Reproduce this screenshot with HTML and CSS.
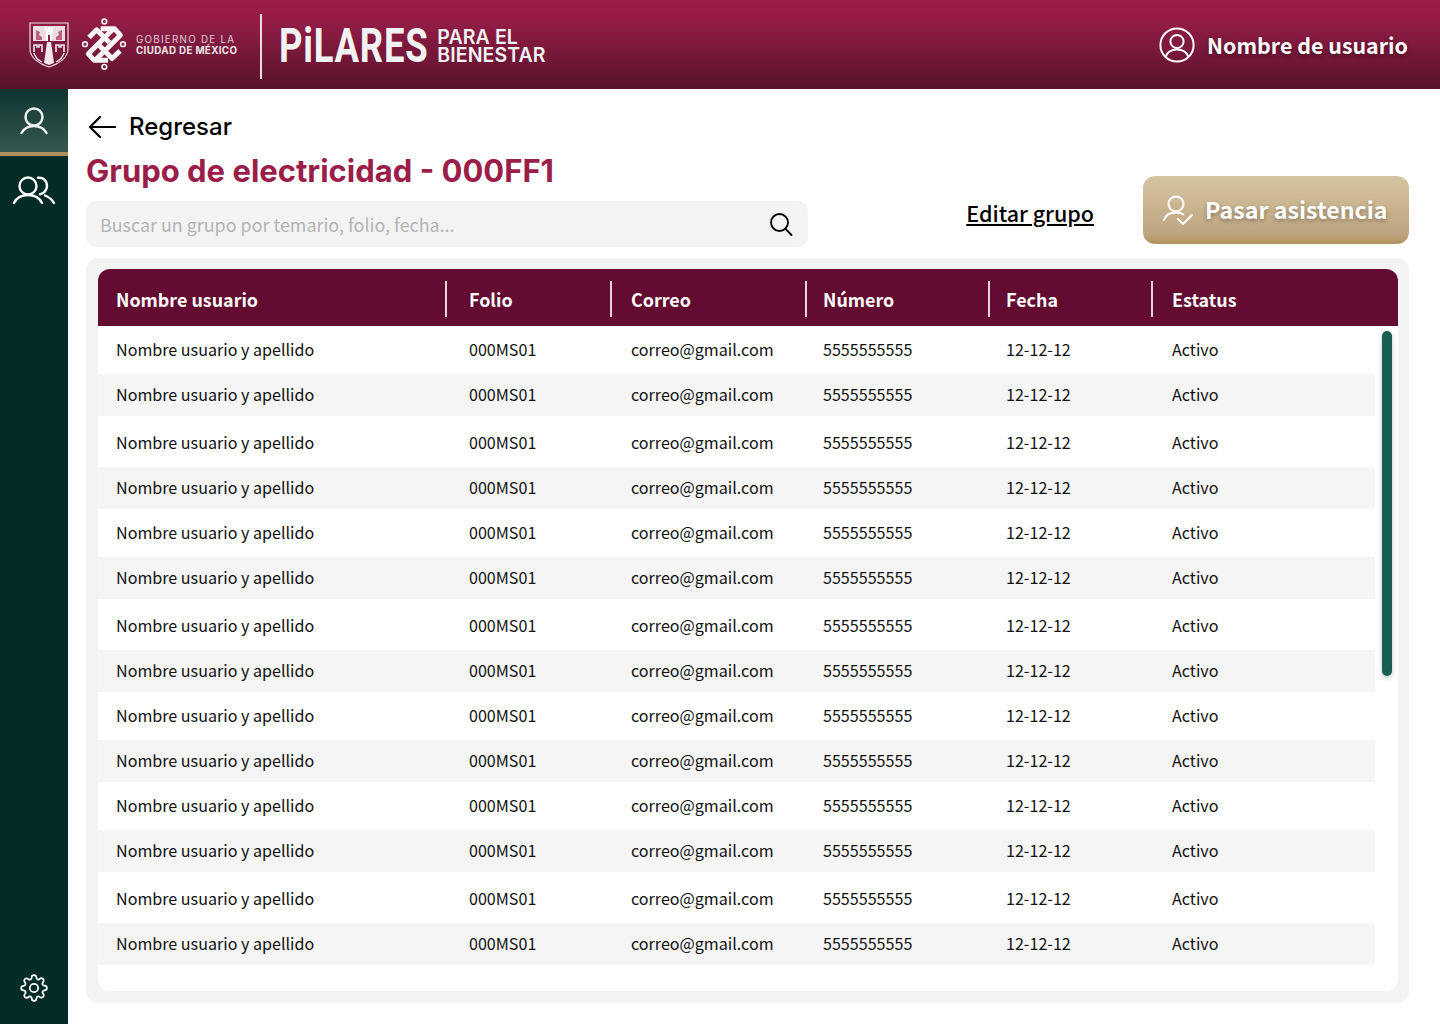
FILE: index.html
```html
<!DOCTYPE html>
<html lang="es">

<head>
    <meta charset="UTF-8">
    <title>Grupo de electricidad</title>
    <link rel="stylesheet" href="styles.css">
</head>

<body>
    <header class="topbar">
        <div class="brand">
            <svg class="shield" viewBox="0 0 40 46" fill="none">
                <path d="M1 1H39V27C39 36 29 42 20 45C11 42 1 36 1 27Z" stroke="#e9dfe3" stroke-width="1.2" />
                <path d="M4 4H36V19H4Z" fill="#ecdde3" />
                <path d="M7 8l4 2-1 3 3 2v3H7zM33 8l-4 2 1 3-3 2v3h6z" fill="#b8627f" />
                <path d="M16 5h2v2h1V5h2v2h1V5h2v4h-1v10h-6V9h-1z" fill="#fff" />
                <path d="M19 13h2v6h-2z" fill="#8c1c44" />
                <path d="M18 20h4l3 21-5 2-5-2Z" fill="#f2e6ea" />
                <path d="M5 30v-7h3v2h2v-2h3v7M35 30v-7h-3v2h-2v-2h-3v7" stroke="#f2e6ea" stroke-width="1.6" />
                <path d="M5 31C6 35 9 38 13 40M35 31C34 35 31 38 27 40" stroke="#f2e6ea" stroke-width="1.3" />
            </svg>
            <svg class="knot" viewBox="180 20 150 170" fill="none">
                <g stroke="#f5eef0" stroke-width="5">
                    <circle cx="253" cy="36" r="7" />
                    <circle cx="253" cy="172" r="7" />
                    <circle cx="195" cy="104" r="7" />
                    <circle cx="309" cy="104" r="7" />
                </g>
                <g stroke="#f8f4f5" stroke-width="15" stroke-linejoin="round">
                    <path d="M207 84L230 61L268 99" />
                    <path d="M242 58H284L301 77L225 153" />
                    <path d="M238 108L276 147L300 124" />
                    <path d="M264 152H222L205 133L281 57" />
                </g>
            </svg>
            <div class="gov-name">
                <span class="gov-top">GOBIERNO DE LA</span>
                <span class="gov-bottom">CIUDAD DE MÉXICO</span>
            </div>
            <div class="brand-line"></div>
            <div class="pilares">PiLARES</div>
            <div class="pilares-sub">PARA EL<br>BIENESTAR</div>
        </div>
        <div class="user-box">
            <svg class="user-icon" viewBox="0 0 36 36" fill="none" stroke="#fff" stroke-width="2">
                <circle cx="18" cy="18" r="16.6" />
                <circle cx="18" cy="14.5" r="6.6" />
                <path d="M6.8 29.5C8.5 25 12.5 22.6 18 22.6S27.5 25 29.2 29.5" />
            </svg>
            <span>Nombre de usuario</span>
        </div>
    </header>

    <div class="layout">
        <nav class="sidebar">
            <a class="side-item active">
                <svg viewBox="0 0 30 30" width="30" height="30" fill="none" stroke="#eef2f0" stroke-width="2.5"
                    stroke-linecap="round">
                    <circle cx="15" cy="11" r="8.5" />
                    <path d="M2.5 27C5 22.5 9 20 15 20S25 22.5 27.5 27" />
                </svg>
            </a>
            <a class="side-item">
                <svg viewBox="0 0 44 30" width="44" height="30" fill="none" stroke="#fff" stroke-width="2.4"
                    stroke-linecap="round">
                    <circle cx="16" cy="11" r="8.5" />
                    <path d="M2 28C4.500 23 9 20 16 20S27.500 23 30 28" />
                    <path d="M26 2.700C31 2 35 5.500 35 11C35 15 32 18.500 28 19.300" />
                    <path d="M33 20.500C37 22 40 24.500 42 28" />
                </svg>
            </a>
            <a class="side-gear">
                <svg viewBox="0 0 24 24" width="28" height="28" fill="none" stroke="#fff" stroke-width="1.5"
                    stroke-linecap="round" stroke-linejoin="round">
                    <circle cx="12" cy="12" r="3.6" />
                    <path
                        d="M19.4 15a1.65 1.65 0 0 0 .33 1.82l.06.06a2 2 0 0 1 0 2.83 2 2 0 0 1-2.83 0l-.06-.06a1.65 1.65 0 0 0-1.82-.33 1.65 1.65 0 0 0-1 1.51V21a2 2 0 0 1-2 2 2 2 0 0 1-2-2v-.09A1.65 1.65 0 0 0 9 19.4a1.65 1.65 0 0 0-1.82.33l-.06.06a2 2 0 0 1-2.83 0 2 2 0 0 1 0-2.83l.06-.06a1.65 1.65 0 0 0 .33-1.82 1.65 1.65 0 0 0-1.51-1H3a2 2 0 0 1-2-2 2 2 0 0 1 2-2h.09A1.65 1.65 0 0 0 4.600 9a1.65 1.65 0 0 0-.33-1.82l-.06-.06a2 2 0 0 1 0-2.83 2 2 0 0 1 2.83 0l.06.06a1.65 1.65 0 0 0 1.82.33H9a1.65 1.65 0 0 0 1-1.51V3a2 2 0 0 1 2-2 2 2 0 0 1 2 2v.09a1.65 1.65 0 0 0 1 1.51 1.65 1.65 0 0 0 1.82-.33l.06-.06a2 2 0 0 1 2.83 0 2 2 0 0 1 0 2.83l-.06.06a1.65 1.65 0 0 0-.33 1.82V9a1.65 1.65 0 0 0 1.51 1H21a2 2 0 0 1 2 2 2 2 0 0 1-2 2h-.09a1.65 1.65 0 0 0-1.51 1z" />
                </svg>
            </a>
        </nav>

        <main class="content">
            <div class="head">
                <div class="head-left">
                    <a class="back-link">
                        <svg viewBox="0 0 28 24" width="28" height="24" fill="none" stroke="#000" stroke-width="2.2"
                            stroke-linecap="round" stroke-linejoin="round">
                            <path d="M27 12H2M12 2L2 12L12 22" />
                        </svg>
                        <span>Regresar</span>
                    </a>
                    <h1>Grupo de electricidad - 000FF1</h1>
                    <div class="search">
                        <span class="search-text">Buscar un grupo por temario, folio, fecha...</span>
                        <svg viewBox="0 0 24 24" width="24" height="24" fill="none" stroke="#000" stroke-width="1.8"
                            stroke-linecap="round">
                            <circle cx="10.500" cy="10.500" r="8.500" />
                            <path d="M16.500 16.800L22.500 23" />
                        </svg>
                    </div>
                </div>
                <div class="head-right">
                    <a class="edit-link">Editar grupo</a>
                    <button class="attend-btn">
                        <svg viewBox="0 0 32 32" width="32" height="32" fill="none" stroke="#fff" stroke-width="2"
                            stroke-linecap="round" stroke-linejoin="round">
                            <circle cx="14" cy="10" r="7.500" />
                            <path d="M2 26C3.500 21 7.500 18.500 14 18.500C17 18.500 19.500 19 21.500 20.500" />
                            <path d="M16 25L21 30L30 21" />
                        </svg>
                        <span>Pasar asistencia</span>
                    </button>
                </div>
            </div>

            <section class="panel">
                <div class="table-box">
                    <div class="table-head">
                        <div class="th th-user">Nombre usuario</div>
                        <div class="th th-folio">Folio</div>
                        <div class="th th-mail">Correo</div>
                        <div class="th th-num">Número</div>
                        <div class="th th-date">Fecha</div>
                        <div class="th th-status">Estatus</div>
                    </div>
                    <div class="table-body">
                        <div class="row"><span>Nombre usuario y apellido</span><span>000MS01</span><span>correo@gmail.com</span><span>5555555555</span><span>12-12-12</span><span>Activo</span></div>
                        <div class="row gray"><span>Nombre usuario y apellido</span><span>000MS01</span><span>correo@gmail.com</span><span>5555555555</span><span>12-12-12</span><span>Activo</span></div>
                        <div class="row tall"><span>Nombre usuario y apellido</span><span>000MS01</span><span>correo@gmail.com</span><span>5555555555</span><span>12-12-12</span><span>Activo</span></div>
                        <div class="row gray"><span>Nombre usuario y apellido</span><span>000MS01</span><span>correo@gmail.com</span><span>5555555555</span><span>12-12-12</span><span>Activo</span></div>
                        <div class="row"><span>Nombre usuario y apellido</span><span>000MS01</span><span>correo@gmail.com</span><span>5555555555</span><span>12-12-12</span><span>Activo</span></div>
                        <div class="row gray"><span>Nombre usuario y apellido</span><span>000MS01</span><span>correo@gmail.com</span><span>5555555555</span><span>12-12-12</span><span>Activo</span></div>
                        <div class="row tall"><span>Nombre usuario y apellido</span><span>000MS01</span><span>correo@gmail.com</span><span>5555555555</span><span>12-12-12</span><span>Activo</span></div>
                        <div class="row gray"><span>Nombre usuario y apellido</span><span>000MS01</span><span>correo@gmail.com</span><span>5555555555</span><span>12-12-12</span><span>Activo</span></div>
                        <div class="row"><span>Nombre usuario y apellido</span><span>000MS01</span><span>correo@gmail.com</span><span>5555555555</span><span>12-12-12</span><span>Activo</span></div>
                        <div class="row gray"><span>Nombre usuario y apellido</span><span>000MS01</span><span>correo@gmail.com</span><span>5555555555</span><span>12-12-12</span><span>Activo</span></div>
                        <div class="row"><span>Nombre usuario y apellido</span><span>000MS01</span><span>correo@gmail.com</span><span>5555555555</span><span>12-12-12</span><span>Activo</span></div>
                        <div class="row gray"><span>Nombre usuario y apellido</span><span>000MS01</span><span>correo@gmail.com</span><span>5555555555</span><span>12-12-12</span><span>Activo</span></div>
                        <div class="row tall"><span>Nombre usuario y apellido</span><span>000MS01</span><span>correo@gmail.com</span><span>5555555555</span><span>12-12-12</span><span>Activo</span></div>
                        <div class="row gray"><span>Nombre usuario y apellido</span><span>000MS01</span><span>correo@gmail.com</span><span>5555555555</span><span>12-12-12</span><span>Activo</span></div>
                    </div>
                    <div class="scroll-thumb"></div>
                </div>
            </section>
        </main>
    </div>
</body>

</html>
```
FILE: styles.css
```css
* {
    box-sizing: border-box;
}

body {
    margin: 0;
    height: 1024px;
    overflow: hidden;
    font-family: "Noto Sans CJK JP", "Open Sans", sans-serif;
    background-color: #fff;
    color: #111;
    display: flex;
    flex-direction: column;
}

/* top bar */
.topbar {
    height: 89px;
    flex: none;
    display: flex;
    align-items: center;
    justify-content: space-between;
    padding: 0 32px 0 29px;
    background-image: linear-gradient(to bottom, #9c1d4a 0%, #921c46 25%, #57122c 100%);
}

.brand {
    display: flex;
    align-items: center;
}

.shield {
    width: 40px;
    height: 46px;
}

.knot {
    width: 50px;
    height: 57px;
    margin-left: 11px;
}

.gov-name {
    margin-left: 6px;
    display: flex;
    flex-direction: column;
    font-family: "Inter", sans-serif;
    color: #f1e6ea;
    font-size: 9.8px;
    line-height: 11px;
    white-space: nowrap;
}

.gov-top {
    letter-spacing: 1.25px;
    font-weight: 400;
    opacity: 0.85;
}

.gov-bottom {
    font-weight: 700;
    letter-spacing: 0.35px;
}

.brand-line {
    width: 2px;
    height: 65px;
    margin: 3px 0 0 23px;
    background-color: #eadde2;
}

.pilares {
    margin: 3px 0 0 17px;
    width: 148px;
    font-family: "Roboto", sans-serif;
    font-weight: 700;
    font-size: 48px;
    line-height: 50px;
    letter-spacing: 1px;
    color: #f2f2f2;
    white-space: nowrap;
    transform: scaleX(0.76);
    transform-origin: left center;
}

.pilares-sub {
    margin: 3px 0 0 10px;
    font-family: "Inter", sans-serif;
    font-weight: 600;
    font-size: 19.5px;
    line-height: 18px;
    letter-spacing: 0.1px;
    color: #f2f2f2;
}

.user-box {
    display: flex;
    align-items: center;
    gap: 12px;
    color: #fff;
    font-size: 21.4px;
    font-weight: 700;
    text-shadow: 0 2px 4px rgba(0, 0, 0, 0.35);
}

.user-icon {
    width: 36px;
    height: 36px;
}

/* sidebar + content */
.layout {
    flex: 1;
    display: flex;
    min-height: 0;
}

.sidebar {
    width: 68px;
    flex: none;
    display: flex;
    flex-direction: column;
    background-color: #032b27;
}

.side-item {
    height: 67px;
    display: flex;
    align-items: flex-start;
    justify-content: center;
    padding-top: 19px;
}

.side-item.active {
    padding-top: 17px;
    border-bottom: 4px solid #b0905f;
    background-image: linear-gradient(to bottom, #0d3631, #36574f);
}

.side-gear {
    margin-top: auto;
    padding-bottom: 22px;
    display: flex;
    justify-content: center;
}

.content {
    flex: 1;
    padding: 0 31px 21px 18px;
    display: flex;
    flex-direction: column;
    min-width: 0;
}

.head {
    display: flex;
    justify-content: space-between;
    align-items: flex-end;
    height: 158px;
}

.head-left {
    width: 722px;
}

.back-link {
    display: flex;
    align-items: center;
    gap: 13px;
    padding-left: 2px;
    font-family: "Inter", sans-serif;
    font-weight: 500;
    font-size: 24px;
    line-height: 32px;
    color: #000;
    transform: translateY(-1px);
}

h1 {
    margin: 7px 0 10px;
    font-family: "Inter", sans-serif;
    font-weight: 700;
    font-size: 31px;
    line-height: 40px;
    color: #9b1d49;
    white-space: nowrap;
}

.search {
    height: 46px;
    display: flex;
    align-items: center;
    justify-content: space-between;
    padding: 0 15px 0 14px;
    background-color: #f3f3f3;
    border-radius: 10px;
}

.search-text {
    font-size: 17.9px;
    color: #b4b4b4;
}

.head-right {
    display: flex;
    align-items: center;
    gap: 49px;
    margin-bottom: 3px;
}

.edit-link {
    margin-top: 4px;
    font-size: 21.5px;
    font-weight: 500;
    color: #000;
    text-decoration: underline;
}

.attend-btn {
    width: 266px;
    height: 68px;
    padding: 0 0 3px 19px;
    border: none;
    border-radius: 12px;
    display: flex;
    align-items: center;
    gap: 11px;
    white-space: nowrap;
    font-family: inherit;
    font-size: 23.2px;
    font-weight: 700;
    color: #fff;
    text-shadow: 0 2px 4px rgba(0, 0, 0, 0.3);
    background-image: linear-gradient(to bottom, #d6c5a2 0%, #bea580 85%, #b1925f 100%);
    cursor: pointer;
}

.attend-btn svg {
    margin-top: 3px;
}

.panel {
    margin-top: 11px;
    flex: 1;
    padding: 11px 11px 12px 12px;
    background-color: #f3f3f3;
    border-radius: 12px;
}

.table-box {
    position: relative;
    height: 100%;
    background-color: #fff;
    border-radius: 12px;
    overflow: hidden;
}

.table-head {
    height: 57px;
    padding-top: 12px;
    display: flex;
    background-color: #630b31;
    color: #fff;
    font-size: 17.9px;
    font-weight: 700;
}

.th {
    height: 36px;
    display: flex;
    align-items: center;
    border-left: 2px solid #e3d3da;
    padding-left: 21px;
    flex: none;
}

.th-user {
    width: 347px;
    border-left: none;
    padding-left: 18px;
}

.th-folio {
    width: 165px;
    padding-left: 22px;
}

.th-mail {
    width: 195px;
    padding-left: 19px;
}

.th-num {
    width: 183px;
    padding-left: 16px;
}

.th-date {
    width: 163px;
    padding-left: 16px;
}

.th-status {
    width: 246px;
    padding-left: 19px;
}

.row {
    width: 1277px;
    height: 48px;
    padding: 0 0 2px 18px;
    display: grid;
    grid-template-columns: 353px 162px 192px 183px 166px 1fr;
    align-items: center;
    font-size: 16.1px;
}

.row.gray {
    height: 42px;
    background-color: #f5f5f5;
}

.row.tall {
    height: 51px;
    padding-top: 3px;
}

.scroll-thumb {
    position: absolute;
    top: 62px;
    left: 1284px;
    width: 10px;
    height: 345px;
    border-radius: 5px;
    background-color: #175f52;
    box-shadow: 0 2px 4px rgba(0, 0, 0, 0.25);
}
```
